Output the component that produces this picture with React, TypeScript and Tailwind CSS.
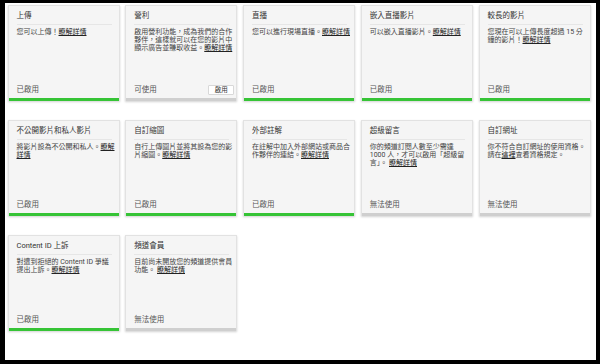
import React from 'react';

interface Feature {
  title: string;
  desc: React.ReactNode;
  status: string;
  enabled: boolean;
  action?: string;
}

const More = () => <span className="underline text-[#222]">瞭解詳情</span>;

const features: Feature[] = [
  { title: '上傳', desc: <>您可以上傳！<More /></>, status: '已啟用', enabled: true },
  {
    title: '營利',
    desc: <>啟用營利功能，成為我們的合作夥伴，這樣就可以在您的影片中顯示廣告並賺取收益。<More /></>,
    status: '可使用',
    enabled: false,
    action: '啟用',
  },
  { title: '直播', desc: <>您可以進行現場直播。<More /></>, status: '已啟用', enabled: true },
  { title: '嵌入直播影片', desc: <>可以嵌入直播影片。<More /></>, status: '已啟用', enabled: true },
  { title: '較長的影片', desc: <>您現在可以上傳長度超過 15 分鐘的影片！<More /></>, status: '已啟用', enabled: true },
  { title: '不公開影片和私人影片', desc: <>將影片設為不公開和私人。<More /></>, status: '已啟用', enabled: true },
  { title: '自訂縮圖', desc: <>自行上傳圖片並將其設為您的影片縮圖。<More /></>, status: '已啟用', enabled: true },
  { title: '外部註解', desc: <>在註解中加入外部網站或商品合作夥伴的連結。<More /></>, status: '已啟用', enabled: true },
  {
    title: '超級留言',
    desc: <>你的頻道訂閱人數至少需達 1000 人，才可以啟用「超級留言」。 <More /></>,
    status: '無法使用',
    enabled: false,
  },
  {
    title: '自訂網址',
    desc: <>你不符合自訂網址的使用資格。請在<span className="underline text-[#222]">這裡</span>查看資格規定。</>,
    status: '無法使用',
    enabled: false,
  },
  { title: 'Content ID 上訴', desc: <>對遭到拒絕的 Content ID 爭議提出上訴。<More /></>, status: '已啟用', enabled: true },
  { title: '頻道會員', desc: <>目前尚未開放您的頻道提供會員功能。 <More /></>, status: '無法使用', enabled: false },
];

const Card: React.FC<{ f: Feature }> = ({ f }) => (
  <div className="h-[96px] flex flex-col bg-[#f5f5f5] border border-[#e2e2e2] border-b-0 shadow-[0_1px_2px_rgba(0,0,0,0.18)]">
    <div className="flex-1 flex flex-col pl-[8px] pr-[3px]">
      <div className="pt-[5px] pb-[3px] text-[7.5px] leading-[10px] text-[#333] border-b border-[#e6e6e6] mr-[4px]">
        {f.title}
      </div>
      <div className="pt-[3px] text-[7px] leading-[8.3px] text-[#444]">{f.desc}</div>
      <div className="mt-auto pb-[3px] flex items-center justify-between mr-[-1px]">
        <span className="text-[7.5px] leading-[10px] text-[#555]">{f.status}</span>
        {f.action && (
          <span className="w-[26px] h-[10px] flex items-center justify-center text-[6.5px] leading-[8px] text-[#333] bg-white border border-[#d8d8d8] rounded-[1px]">
            {f.action}
          </span>
        )}
      </div>
    </div>
    <div className={f.enabled ? 'h-[2.5px] bg-[#36c436]' : 'h-[2.5px] bg-[#cfcfcf]'} />
  </div>
);

export default function App() {
  return (
    <div
      className="w-[600px] h-[364px] bg-black pt-[3px] pl-[5px] pr-[4px] pb-[4px]"
      style={{ fontFamily: 'Roboto, "Noto Sans CJK TC", sans-serif' }}
    >
      <div className="w-full h-full bg-white pt-[1.5px] pl-[2.5px]">
        <div className="grid grid-cols-[repeat(5,112px)] gap-x-[5.75px] gap-y-[19px]">
          {features.map((f) => (
            <Card key={f.title} f={f} />
          ))}
        </div>
      </div>
    </div>
  );
}
